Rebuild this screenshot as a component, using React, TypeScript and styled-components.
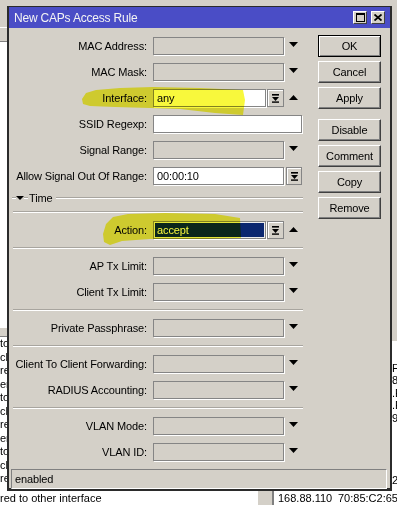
import React from 'react';
import styled, { createGlobalStyle, css } from 'styled-components';

const Global = createGlobalStyle`
  html, body { margin: 0; padding: 0; background: #fff; }
  body { font-family: "Liberation Sans", Arial, sans-serif; font-size: 11px; color: #000; }
  * { box-sizing: border-box; }
`;

const FACE = '#d4d0c8';

const Desktop = styled.div`
  position: relative;
  width: 397px;
  height: 505px;
  overflow: hidden;
  background: #fff;
  display: flex;
  flex-direction: column;
`;

const Upper = styled.div`
  display: flex;
  height: 491px;
  flex: none;
`;

const LeftStrip = styled.div`
  width: 8px;
  flex: none;
  display: flex;
  flex-direction: column;
  overflow: hidden;
  background: #fff;
`;

const Middle = styled.div`
  flex: 1;
  background: ${FACE};
`;

const RightStrip = styled.div`
  width: 5px;
  flex: none;
  display: flex;
  flex-direction: column;
  overflow: hidden;
  background: #fff;
`;

const StripBlock = styled.div<{ $h: number; $gray?: boolean; $etched?: boolean }>`
  height: ${(p) => p.$h}px;
  flex: none;
  background: ${(p) => (p.$gray ? FACE : '#fff')};
  ${(p) =>
    p.$etched &&
    css`
      border-top: 1px solid #fff;
      border-bottom: 1px solid #808080;
    `}
`;

const ListRow = styled.div<{ $h: number }>`
  height: ${(p) => p.$h}px;
  flex: none;
  line-height: ${(p) => p.$h}px;
  white-space: nowrap;
  overflow: hidden;
  font-size: 11px;
`;

const BottomRow = styled.div`
  height: 14px;
  flex: none;
  display: flex;
  align-items: center;
  white-space: nowrap;
  font-size: 11px;
  line-height: 14px;
`;

const BottomText = styled.span<{ $w: number }>`
  width: ${(p) => p.$w}px;
  flex: none;
  overflow: hidden;
`;

const ScrollStub = styled.div`
  width: 16px;
  height: 14px;
  flex: none;
  background: ${FACE};
  margin-right: 4px;
  border-right: 2px solid #808080;
`;

/* ---------- Window ---------- */

const Window = styled.div`
  position: absolute;
  left: 7px;
  top: 6px;
  width: 385px;
  height: 485px;
  background: ${FACE};
  border-style: solid;
  border-color: #2b2b2b;
  border-width: 1px 2px 3px 2px;
  display: flex;
  flex-direction: column;
  letter-spacing: -0.12px;
`;

const TitleBar = styled.div`
  height: 21px;
  flex: none;
  background: #4a4dc6;
  display: flex;
  align-items: center;
  padding: 0 5px;
  color: #f4f4f4;
  font-size: 12px;
  letter-spacing: -0.2px;
`;

const TitleText = styled.div`
  flex: 1;
  white-space: nowrap;
`;

const TitleButton = styled.div`
  width: 14px;
  height: 13px;
  margin-left: 4px;
  background: ${FACE};
  border: 1px solid;
  border-color: #fff #404040 #404040 #fff;
  display: flex;
  align-items: center;
  justify-content: center;
`;

const Body = styled.div`
  flex: 1;
  display: flex;
  padding: 7px 0 0 4px;
`;

const Form = styled.div`
  width: 292px;
  flex: none;
  display: flex;
  flex-direction: column;
  padding-top: 2px;
`;

const Row = styled.div`
  display: grid;
  grid-template-columns: 134px 149px;
  column-gap: 6px;
  height: 18px;
  margin-bottom: 8px;
  align-items: center;
`;

const Label = styled.div`
  text-align: right;
  white-space: nowrap;
  line-height: 18px;
`;

const FieldCell = styled.div`
  display: flex;
  align-items: center;
  height: 18px;
`;

type Tone = 'gray' | 'white' | 'selected';

const InputBox = styled.div<{ $w: number; $tone: Tone }>`
  width: ${(p) => p.$w}px;
  height: 18px;
  flex: none;
  border: 1px solid #858585;
  box-shadow: 1px 1px 0 #fff;
  padding-left: 3px;
  line-height: 16px;
  white-space: nowrap;
  overflow: hidden;
  background: ${(p) => (p.$tone === 'gray' ? FACE : p.$tone === 'white' ? '#fff' : '#0b2770')};
  color: ${(p) => (p.$tone === 'selected' ? '#fff' : '#000')};
  ${(p) =>
    p.$tone === 'selected' &&
    css`
      box-shadow: inset 0 0 0 1px #ececec, 1px 1px 0 #fff;
    `}
`;

const ComboButton = styled.div<{ $w: number; $gap: number }>`
  width: ${(p) => p.$w}px;
  height: 18px;
  flex: none;
  margin-left: ${(p) => p.$gap}px;
  background: ${FACE};
  border: 1px solid #858585;
  box-shadow: inset 1px 1px 0 #fff;
  display: flex;
  align-items: center;
  justify-content: center;
`;

const ArrowSlot = styled.div<{ $up?: boolean }>`
  width: 18px;
  height: 18px;
  flex: none;
  display: flex;
  align-items: center;
  justify-content: center;
  padding-bottom: ${(p) => (p.$up ? 1 : 3)}px;
`;

const Separator = styled.div`
  height: 2px;
  flex: none;
  margin: 0 2px 8px 0;
  border-top: 1px solid #a8a59f;
  border-bottom: 1px solid #fff;
`;

const GroupHeader = styled.div`
  height: 10px;
  flex: none;
  display: flex;
  align-items: center;
  margin: 0 2px 8px -1px;
`;

const GroupLine = styled.div<{ $w?: number }>`
  height: 2px;
  ${(p) => (p.$w ? `width: ${p.$w}px; flex: none;` : 'flex: 1;')}
  border-top: 1px solid #a8a59f;
  border-bottom: 1px solid #fff;
`;

const GroupTitle = styled.div`
  margin: 0 3px 0 1px;
  line-height: 10px;
  white-space: nowrap;
`;

const Buttons = styled.div`
  width: 63px;
  flex: none;
  margin-left: 13px;
  display: flex;
  flex-direction: column;
  gap: 4px;
`;

const Btn = styled.div<{ $default?: boolean; $spaced?: boolean }>`
  height: 22px;
  flex: none;
  background: ${FACE};
  border: 1px solid;
  border-color: #fff #404040 #404040 #fff;
  box-shadow: inset -1px -1px 0 #808080;
  display: flex;
  align-items: center;
  justify-content: center;
  margin-top: ${(p) => (p.$spaced ? 6 : 0)}px;
  ${(p) =>
    p.$default &&
    css`
      border-color: #000;
      box-shadow: inset 1px 1px 0 #fff, inset -1px -1px 0 #808080;
    `}
`;

const StatusBar = styled.div`
  height: 20px;
  flex: none;
  margin: 0 3px 0 2px;
  border: 1px solid;
  border-color: #808080 #fff #fff #808080;
  padding-left: 3px;
  line-height: 18px;
`;

const Highlights = styled.svg`
  position: absolute;
  left: 0;
  top: 0;
  pointer-events: none;
  mix-blend-mode: multiply;
`;

/* ---------- icons ---------- */

const Down = () => (
  <svg width="9" height="5" viewBox="0 0 9 5">
    <polygon points="0,0 9,0 4.5,5" fill="#000" />
  </svg>
);
const Up = () => (
  <svg width="9" height="5" viewBox="0 0 9 5">
    <polygon points="0,5 9,5 4.5,0" fill="#000" />
  </svg>
);
const ComboIcon = () => (
  <svg width="9" height="9" viewBox="0 0 9 9">
    <rect x="1" y="0" width="7" height="1.6" fill="#000" />
    <polygon points="1,3 8,3 4.5,7" fill="#000" />
    <rect x="1" y="7.4" width="7" height="1.4" fill="#000" />
  </svg>
);
const SmallDown = () => (
  <svg width="8" height="4" viewBox="0 0 8 4">
    <polygon points="0,0 8,0 4,4" fill="#000" />
  </svg>
);
const MaxIcon = () => (
  <svg width="9" height="9" viewBox="0 0 9 9">
    <rect x="0.5" y="0.5" width="8" height="8" fill="none" stroke="#000" strokeWidth="1" />
    <rect x="0" y="0" width="9" height="2" fill="#000" />
  </svg>
);
const CloseIcon = () => (
  <svg width="8" height="7" viewBox="0 0 8 7">
    <path d="M0.5 0.5 L7.5 6.5 M7.5 0.5 L0.5 6.5" stroke="#000" strokeWidth="1.8" />
  </svg>
);

/* ---------- data ---------- */

type Kind = 'drop' | 'comboUp' | 'combo' | 'full';
type FieldDef = { label: string; kind: Kind; tone: Tone; value?: string };

const Field = ({ f }: { f: FieldDef }) => (
  <Row>
    <Label>{f.label}:</Label>
    <FieldCell>
      {f.kind === 'full' && <InputBox $w={149} $tone={f.tone}>{f.value}</InputBox>}
      {f.kind === 'drop' && (
        <>
          <InputBox $w={131} $tone={f.tone}>{f.value}</InputBox>
          <ArrowSlot>
            <Down />
          </ArrowSlot>
        </>
      )}
      {f.kind === 'combo' && (
        <>
          <InputBox $w={131} $tone={f.tone}>{f.value}</InputBox>
          <ComboButton $w={16} $gap={2}>
            <ComboIcon />
          </ComboButton>
        </>
      )}
      {f.kind === 'comboUp' && (
        <>
          <InputBox $w={113} $tone={f.tone}>{f.value}</InputBox>
          <ComboButton $w={17} $gap={1}>
            <ComboIcon />
          </ComboButton>
          <ArrowSlot $up>
            <Up />
          </ArrowSlot>
        </>
      )}
    </FieldCell>
  </Row>
);

const top: FieldDef[] = [
  { label: 'MAC Address', kind: 'drop', tone: 'gray' },
  { label: 'MAC Mask', kind: 'drop', tone: 'gray' },
  { label: 'Interface', kind: 'comboUp', tone: 'white', value: 'any' },
  { label: 'SSID Regexp', kind: 'full', tone: 'white' },
  { label: 'Signal Range', kind: 'drop', tone: 'gray' },
  { label: 'Allow Signal Out Of Range', kind: 'combo', tone: 'white', value: '00:00:10' },
];

const groups: FieldDef[][] = [
  [{ label: 'Action', kind: 'comboUp', tone: 'selected', value: 'accept' }],
  [
    { label: 'AP Tx Limit', kind: 'drop', tone: 'gray' },
    { label: 'Client Tx Limit', kind: 'drop', tone: 'gray' },
  ],
  [{ label: 'Private Passphrase', kind: 'drop', tone: 'gray' }],
  [
    { label: 'Client To Client Forwarding', kind: 'drop', tone: 'gray' },
    { label: 'RADIUS Accounting', kind: 'drop', tone: 'gray' },
  ],
  [
    { label: 'VLAN Mode', kind: 'drop', tone: 'gray' },
    { label: 'VLAN ID', kind: 'drop', tone: 'gray' },
  ],
];

const buttons = ['OK', 'Cancel', 'Apply', 'Disable', 'Comment', 'Copy', 'Remove'];

const leftRows = ['to', 'ch', 're', 'en', 'to', 'ch', 're', 'en', 'to', 'ch', 're'];
const rightRows = ['', 'F', '8', '.E', '.E', '93', '', '', '', '', '2'];

export default function App() {
  return (
    <>
      <Global />
      <Desktop>
        <Upper>
          <LeftStrip>
            <StripBlock $h={27} $gray />
            <StripBlock $h={15} $gray $etched />
            <StripBlock $h={285} />
            <StripBlock $h={10} $gray $etched />
            {leftRows.map((t, i) => (
              <ListRow key={i} $h={13.5}>
                {t}
              </ListRow>
            ))}
          </LeftStrip>
          <Middle />
          <RightStrip>
            <StripBlock $h={341} $gray />
            <StripBlock $h={8} />
            {rightRows.map((t, i) => (
              <ListRow key={i} $h={12.5}>
                {t}
              </ListRow>
            ))}
          </RightStrip>
        </Upper>
        <BottomRow>
          <BottomText $w={258}>red to other interface</BottomText>
          <ScrollStub />
          <BottomText $w={60}>168.88.110</BottomText>
          <BottomText $w={59}>70:85:C2:65</BottomText>
        </BottomRow>

        <Window>
          <TitleBar>
            <TitleText>New CAPs Access Rule</TitleText>
            <TitleButton>
              <MaxIcon />
            </TitleButton>
            <TitleButton>
              <CloseIcon />
            </TitleButton>
          </TitleBar>
          <Body>
            <Form>
              {top.map((f) => (
                <Field key={f.label} f={f} />
              ))}
              <GroupHeader>
                <GroupLine $w={4} />
                <SmallDown />
                <GroupLine $w={4} />
                <GroupTitle>Time</GroupTitle>
                <GroupLine />
              </GroupHeader>
              {groups.map((g, gi) => (
                <React.Fragment key={gi}>
                  <Separator />
                  {g.map((f) => (
                    <Field key={f.label} f={f} />
                  ))}
                </React.Fragment>
              ))}
            </Form>
            <Buttons>
              {buttons.map((b, i) => (
                <Btn key={b} $default={i === 0} $spaced={i === 3}>
                  {b}
                </Btn>
              ))}
            </Buttons>
          </Body>
          <StatusBar>enabled</StatusBar>
        </Window>

        <Highlights width="397" height="505" viewBox="0 0 397 505">
          <polygon
            points="82,99 86,93 96,90 120,88 153,87 200,88 243,90 245,100 243,115 215,113 180,109 150,108 115,107 90,106 83,104"
            fill="#f8f83c"
          />
          <polygon
            points="103,234 106,224 113,217 128,214 165,213 215,214 240,218 241,238 205,239 150,239 122,241 110,245 104,242"
            fill="#f8f83c"
          />
        </Highlights>
      </Desktop>
    </>
  );
}
